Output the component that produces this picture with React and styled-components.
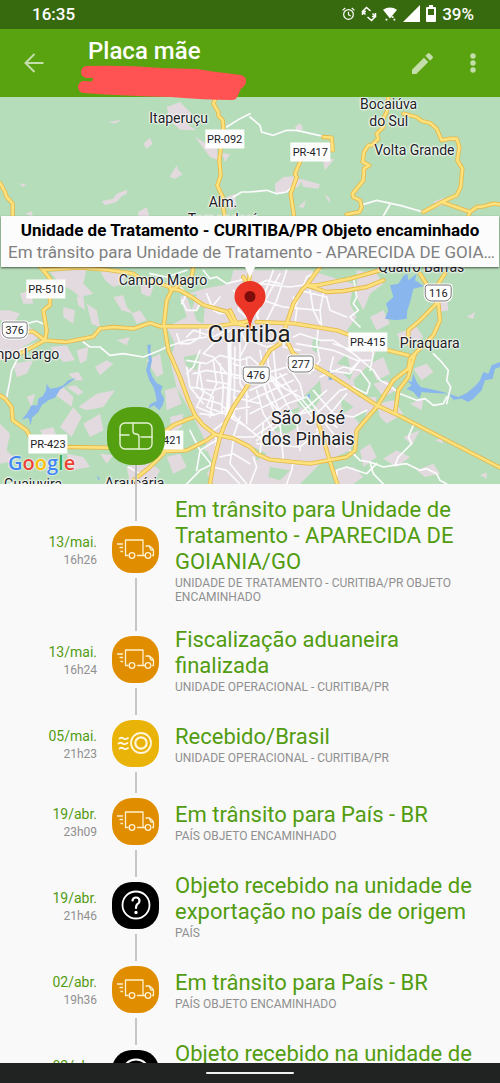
import styled, { createGlobalStyle } from 'styled-components'

const GlobalStyle=createGlobalStyle`
  * {
    box-sizing: border-box;
  }
  body {
    margin: 0;
    background-color: #f9f9f9;
    font-family: Roboto, "Liberation Sans", sans-serif;
  }
`;

const Screen=styled.div`
  width: 100%;
  height: 100vh;
  display: flex;
  flex-direction: column;
  overflow: hidden;
`;

const StatusBar=styled.div`
  flex: none;
  height: 29px;
  padding: 0 26px 2px 32px;
  display: flex;
  align-items: center;
  justify-content: space-between;
  background-color: #376a0e;
  color: #fff;
  font-size: 17px;
  font-weight: 500;
`;

const StatusIcons=styled.div`
  display: flex;
  align-items: center;
  gap: 6px;
`;

const AppBar=styled.header`
  flex: none;
  height: 68px;
  padding: 0 9px 0 16px;
  display: flex;
  align-items: center;
  background-color: #59a310;
`;

const IconButton=styled.button`
  flex: none;
  width: 36px;
  height: 36px;
  padding: 0;
  border: none;
  background: none;
  display: flex;
  align-items: center;
  justify-content: center;
  color: #c3deaa;
  cursor: pointer;
`;

const Heading=styled.div`
  flex: 1;
  height: 100%;
  padding: 8px 0 0 24px;
`;

const Title=styled.h1`
  margin: 0;
  padding-left: 12px;
  font-size: 24px;
  line-height: 28px;
  font-weight: 500;
  color: #fff;
`;

const Scribble=styled.svg`
  display: block;
  position: relative;
  z-index: 2;
`;

const Actions=styled.div`
  display: flex;
  gap: 15px;
`;

const MapArea=styled.div`
  flex: none;
  position: relative;
  height: 387px;
`;

const MapView=styled.div`
  position: absolute;
  inset: 0;
  overflow: hidden;
  background-color: #b6ddb9;
`;

const MapArt=styled.svg`
  display: block;
  width: 100%;
  height: 100%;
`;

const Place=styled.span`
  position: absolute;
  left: ${p=>p.$x/15}%;
  top: ${p=>p.$y}px;
  transform: translate(-50%, -50%);
  font-size: ${p=>p.$size || 14}px;
  line-height: ${p=>p.$size ? 21 : 17}px;
  white-space: pre;
  text-align: center;
  color: #202124;
  text-shadow: 0 0 2px #fff, 0 0 2px #fff, 0 0 2px #fff, 0 0 3px #fff;
`;

const Road=styled(Place)`
  padding: 0 2px;
  font-size: 11px;
  line-height: 19px;
  background-color: #fdfdfd;
  text-shadow: none;
`;

const Shield=styled(Road)`
  padding: 0 3px;
  line-height: 15px;
  border: 1px solid #777;
  border-radius: 3px 3px 7px 7px;
  box-shadow: 0 0 0 1px #fff;
`;

const Logo=styled.div`
  position: absolute;
  left: 8px;
  bottom: 9px;
  font-family: "Open Sans", sans-serif;
  font-size: 20px;
  line-height: 24px;
  font-weight: 600;
  text-shadow: 0 0 2px #fff, 0 0 2px #fff;
`;

const Letter=styled.span`
  color: ${p=>p.$color};
`;

const Pin=styled.svg`
  position: absolute;
  left: 50%;
  top: 184px;
  transform: translateX(-50%);
`;

const InfoWindow=styled.div`
  position: absolute;
  left: 1px;
  right: 1px;
  top: 119px;
  padding: 4px 0 3px;
  background-color: #fcfcfc;
  box-shadow: 0 1px 2px rgba(0,0,0,0.6);
  &:after{
    content: '';
    position: absolute;
    left: 50%;
    top: 100%;
    margin-left: -5px;
    border: 5px solid transparent;
    border-top: 11px solid #fcfcfc;
    border-bottom: none;
  }
`;

const InfoTitle=styled.div`
  font-size: 17px;
  line-height: 21px;
  font-weight: 700;
  color: #000;
  text-align: center;
  white-space: nowrap;
`;

const InfoText=styled.div`
  padding-left: 7px;
  font-size: 17px;
  line-height: 23px;
  color: #808080;
  white-space: nowrap;
  overflow: hidden;
  text-overflow: ellipsis;
`;

const Badge=styled.div`
  position: absolute;
  left: 107px;
  bottom: 19px;
  width: 58px;
  height: 58px;
  border-radius: 25px;
  display: flex;
  align-items: center;
  justify-content: center;
  background-color: #55a010;
  &:after{
    content: '';
    position: absolute;
    top: 100%;
    left: 28px;
    width: 2px;
    height: 19px;
    background-color: #b9bdb9;
  }
`;

const Timeline=styled.ol`
  flex: 1;
  min-height: 0;
  margin: 0;
  padding: 0;
  overflow: hidden;
  list-style: none;
`;

const Row=styled.li`
  min-height: 78px;
  display: flex;
  align-items: stretch;
`;

const When=styled.div`
  flex: none;
  width: 97px;
  padding-top: 2px;
  display: flex;
  flex-direction: column;
  justify-content: center;
  text-align: right;
`;

const Day=styled.span`
  font-size: 14px;
  line-height: 20px;
  color: #519c10;
`;

const Hour=styled.span`
  font-size: 12px;
  line-height: 16px;
  color: #909090;
`;

const Track=styled.div`
  flex: none;
  width: 78px;
  padding-right: 1px;
  display: flex;
  flex-direction: column;
  align-items: center;
  gap: 5px;
`;

const Line=styled.div`
  flex: 1;
  width: 2px;
  background-color: #c6c6c6;
`;

const Dot=styled.div`
  flex: none;
  width: 47px;
  height: 47px;
  border-radius: 20px;
  display: flex;
  align-items: center;
  justify-content: center;
  background-color: ${p=>p.$color};
`;

const Event=styled.div`
  flex: 1;
  padding: 13px 24px 10px 0;
  display: flex;
  flex-direction: column;
  justify-content: center;
`;

const EventTitle=styled.div`
  font-size: 22px;
  line-height: 26px;
  color: #519c10;
`;

const EventPlace=styled.div`
  margin-top: 1px;
  font-size: 12px;
  line-height: 14px;
  color: #909090;
  text-transform: uppercase;
`;

const NavBar=styled.div`
  flex: none;
  height: 20px;
  display: flex;
  justify-content: center;
  padding-top: 9px;
  background-color: #202322;
`;

const NavHandle=styled.div`
  width: 88px;
  height: 2px;
  border-radius: 1px;
  background-color: #f2f2f2;
`;

// map drawing, 3 units for each pixel
const urban=[
  'M540 600L610 575L690 560L700 520L930 520L1010 545L1060 560L1050 620L1070 660L1040 700L1090 740L1130 760L1110 800L1060 850L1075 900L1130 900L1120 950L1080 970L1050 1060L960 1100L900 1161L640 1161L600 1100L620 1040L580 960L530 870L510 790L525 740L500 690L560 660Z',
  'M500 30L540 15L575 50L560 80L590 100L540 98L510 70Z',
  'M585 120L620 140L650 150L655 190L630 180Z', 'M665 168L690 172L675 195Z',
  'M430 140L450 122L458 140L440 155Z', 'M508 240L530 205L535 220L548 232L525 245Z',
  'M305 312L340 305L350 290L382 278L380 292L365 298L350 315L315 325Z',
  'M60 258L80 264L66 270Z', 'M415 345L440 330L448 357L415 357Z', 'M75 352L95 342L98 357Z',
  'M325 75L365 68L345 80Z', 'M680 300L705 290L710 330L690 340Z',
  'M825 260L850 240L880 238L905 250L895 270L870 275L850 290L825 290Z', 'M900 245L960 262L955 275L910 270Z',
  'M968 190L1004 185L975 220Z', 'M973 290L990 305L988 318Z', 'M895 330L917 310L912 332Z',
  'M885 90L900 78L910 96L890 105Z', 'M1300 315L1330 302L1340 318L1310 332Z',
  'M150 525L260 515L250 560L280 590L240 600L215 580L180 560Z',
  'M230 600L250 595L255 640L235 625Z', 'M300 520L380 520L370 560L340 570L315 550Z', 'M340 600L370 595L380 630L400 650L365 640Z',
  'M190 630L225 640L220 680L190 660Z', 'M260 620L290 640L300 690L275 680Z', 'M420 560L460 570L450 600L425 590Z',
  'M0 690L80 680L120 720L70 750L60 780L0 790Z', 'M30 640L60 650L40 680L0 670L0 640Z', 'M60 590L90 580L100 620L70 620Z',
  'M150 750L200 745L225 790L190 795Z', 'M40 800L100 790L80 830L50 840Z', 'M230 760L265 750L260 790L240 800Z',
  'M285 810L320 790L340 800L300 835Z', 'M350 730L390 720L380 745Z', 'M205 830L235 825L250 850L225 850Z',
  'M160 890L190 870L220 900L215 930L175 900Z', 'M200 870L225 865L250 885L235 895Z',
  'M235 930L290 890L345 880L310 930L260 940Z', 'M180 990L220 930L245 960L215 1020Z',
  'M80 900L105 890L95 930Z', 'M250 980L300 950L310 1000L270 1020Z', 'M120 1000L160 990L170 1020L135 1025Z',
  'M0 980L30 1010L20 1060L50 1090L0 1100Z', 'M200 1070L250 1080L270 1110L215 1120Z', 'M300 1070L340 1075L320 1100Z',
  'M380 1110L440 1090L480 1120L460 1161L390 1161Z', 'M495 880L530 870L545 920L500 940Z', 'M510 960L550 950L545 990L515 1010Z',
  'M440 790L480 770L490 830L470 840Z', 'M500 1080L540 1070L560 1110L520 1130Z', 'M395 650L420 640L440 670L410 680Z',
  'M1070 520L1130 530L1150 560L1110 590L1090 640L1070 600Z', 'M1110 660L1150 640L1170 680L1130 700Z',
  'M1190 710L1250 690L1270 720L1230 740L1200 730Z', 'M1240 815L1280 800L1300 825L1265 850Z',
  'M1310 610L1340 590L1345 640L1315 645Z', 'M1130 920L1180 910L1210 950L1160 980L1140 960Z',
  'M1210 1020L1260 1000L1235 1045Z', 'M1230 920L1270 905L1265 940Z', 'M1080 1060L1110 1040L1130 1080L1090 1110Z',
  'M1000 1120L1060 1110L1090 1140L1060 1161L1010 1161Z', 'M1150 1085L1190 1060L1230 1080L1190 1110Z',
  'M1250 1120L1300 1100L1320 1130L1275 1140Z', 'M1305 1030L1325 1022L1330 1040Z', 'M1110 800L1150 780L1170 830L1130 850Z',
  'M1120 860L1160 850L1190 880L1150 900Z', 'M1400 660L1425 645L1420 665Z', 'M1440 1135L1460 1125L1460 1145Z',
];

const parks=[
  'M580 640L615 620L610 680L590 670Z', 'M550 780L600 770L590 820L560 810Z', 'M940 720L960 730L950 770L935 755Z',
  'M915 895L960 850L965 900L930 950L890 920Z', 'M870 940L900 930L890 960Z', 'M620 520L665 530L650 560L615 550Z',
  'M560 1090L620 1060L640 1100L600 1161L560 1161Z', 'M1030 830L1060 820L1050 850Z', 'M1060 960L1100 940L1090 990Z',
  'M560 600L590 590L575 640Z', 'M1020 900L1060 930L1030 950Z', 'M760 1050L800 1070L770 1090Z', 'M810 1110L870 1120L840 1150L805 1140Z',
  'M870 960L900 985L860 1010L820 1000Z', 'M1010 800L1040 770L1050 810Z',
];

const water=[
  'M442 743L453 743L451 760L456 790L450 820L458 840L470 858L488 868L482 885L493 905L488 925L478 940L462 925L445 935L450 922L470 912L466 890L460 870L448 850L438 820L446 790Z',
  'M228 842L205 850L190 865L170 872L150 875L140 860L138 880L128 898L115 905L112 925L95 925L80 950L65 968L85 962L92 985L96 962L115 945L125 925L145 910L165 902L180 878L205 860Z',
  'M1170 565L1195 560L1212 535L1222 530L1225 550L1250 530L1245 550L1272 568L1240 575L1232 610L1222 640L1220 665L1190 670L1155 665L1165 640L1158 620L1180 600Z',
  'M1220 850L1235 855L1240 830L1250 855L1262 870L1300 878L1330 885L1375 900L1400 888L1425 868L1440 850L1450 825L1465 830L1475 805L1500 795L1500 810L1485 815L1478 845L1455 850L1445 880L1420 905L1405 915L1385 905L1360 908L1345 890L1300 888L1265 885L1258 905L1240 885L1220 875L1235 865Z',
  'M985 820L998 818L996 850L986 848Z', 'M920 895L930 890L930 905Z', 'M290 1135L300 1145L295 1150Z',
];

const streets=[
  'M680 90L720 65L750 50', 'M700 300L725 285L750 285',
  'M750 60L780 85L785 105L820 115L860 100L890 100L970 118', 'M750 285L800 280L830 290L860 285L880 265',
  'M1090 322L1130 310L1200 325L1270 345', 'M1170 322L1150 357', 'M610 520L630 545L650 540L680 560L740 545',
  'M130 730L60 760L50 790L35 820L30 850L20 900', 'M250 735L270 750L300 750L330 775L370 770L430 780L480 760L500 750L560 730L620 720',
  'M80 680L110 672L130 680', 'M530 560L560 590L545 620', 'M450 530L500 540L560 520',
  'M545 610L560 640L590 640L600 620L640 625L660 600', 'M620 590L640 640L660 650L690 645',
  'M530 710L540 740L570 740L600 720L600 690L640 700', 'M560 720L580 700L640 720L680 700',
  'M700 580L720 600L715 640L740 660', 'M750 600L770 640L740 680', 'M790 590L770 650L780 680',
  'M560 790L620 800L660 775L720 790L750 780', 'M580 830L620 820L680 830L780 845', 'M600 760L580 810L560 830',
  'M570 870L640 880L670 870L740 890', 'M600 800L590 870L640 900L630 960', 'M640 790L650 860L620 930L700 960',
  'M620 850L680 860', 'M600 830L610 890L590 930L640 950', 'M560 810L570 870L610 920', 'M660 800L670 870L665 950',
  'M720 740L720 860L745 900', 'M740 780L740 980', 'M705 750L702 960', 'M600 950L640 955L680 940L750 930', 'M700 800L760 820', 'M700 840L790 860',
  'M690 960L740 990L800 1040', 'M700 900L780 920', 'M680 970L640 1000L650 1030L600 1060',
  'M720 960L700 1020L760 1020L820 980', 'M780 760L790 820L800 900L850 960', 'M820 760L830 860L900 900L950 960', 'M800 760L810 840L850 900',
  'M750 850L790 830L900 800', 'M750 880L860 830', 'M750 910L880 850', 'M750 950L850 900L890 880', 'M760 1000L860 920L920 900', 'M770 1030L870 960L940 940',
  'M770 880L790 950L820 1000', 'M785 850L840 990', 'M800 850L850 970', 'M820 840L880 960', 'M840 830L880 890L920 940L960 990', 'M750 780L850 870',
  'M750 730L800 750L840 740', 'M860 800L900 860L910 900', 'M870 760L900 790L930 830',
  'M820 520L790 600L770 660', 'M860 520L830 610L800 670', 'M840 530L790 620', 'M880 600L890 640L885 680', 'M890 620L920 540L960 520',
  'M760 600L850 630L960 640', 'M780 560L870 570L940 560', 'M930 580L940 640L960 680', 'M970 590L960 640L965 690', 'M900 580L980 600L990 640L1040 660',
  'M1060 540L1070 600L1060 620L1075 640L1050 660L1080 690', 'M880 720L900 710L960 730L1000 730L1060 770L1120 820L1140 850L1160 860L1200 890L1250 910L1275 905L1300 925L1330 920L1340 900',
  'M890 740L1000 760L1070 790L1110 790', 'M955 690L950 740L960 790L940 820', 'M1000 740L1060 760L1110 750L1120 770L1110 820', 'M1000 780L990 820L1050 830L1080 790',
  'M960 840L1030 810L1080 820L1110 860L1100 890L1060 870L1020 880L990 910', 'M1080 790L1050 820', 'M920 980L1000 900', 'M900 950L980 880', 'M950 1000L1040 890',
  'M920 900L960 950L1010 990', 'M940 880L1000 950L1060 960L1100 940', 'M960 960L1000 1010L1010 1050', 'M1300 770L1320 790L1345 820L1340 850L1352 870L1340 920', 'M1240 985L1225 1020L1235 1040L1195 1080L1185 1105',
  'M1050 1060L1080 1090L1110 1095L1150 1110L1180 1105L1220 1100L1260 1120L1280 1115L1310 1130L1320 1150L1340 1161', 'M1010 1150L1010 1120L1040 1110L1100 1130L1130 1100', 'M1110 1095L1120 1130L1150 1161',
  'M880 1090L875 1120L860 1161', 'M760 1080L770 1110L750 1161', 'M650 1030L640 1100L600 1120L560 1161', 'M700 1030L690 1100L740 1161',
  'M600 1060L640 1110L680 1120L720 1161', 'M570 1000L600 1060L590 1120', 'M770 1040L900 1050L960 1000', 'M790 980L780 1070', 'M660 1080L700 1070L750 1100',
  'M840 980L850 1090', 'M890 970L900 1060', 'M590 900L660 920L750 1000', 'M610 770L640 780L680 830', 'M690 700L640 740L610 770', 'M700 710L690 750', 'M720 700L740 740L720 780',
  'M385 1110L420 1130L400 1161', 'M840 560L800 550L760 570', 'M860 690L850 750L900 760',
];

const highways=[
  'M0 258L15 285L20 300L38 320L38 400L80 470L130 520L150 545L150 624L130 640L140 700L135 730',
  'M648 0L640 20L655 45L655 55L668 70L672 120L662 155L658 190L662 235L652 265L668 300L668 320L680 400',
  'M130 518L240 512L320 518L400 530L420 545L480 560L510 570', 'M510 575L540 580L575 600L610 624L680 644L700 680',
  'M580 510L575 540L515 579L500 610L492 680L505 760L540 840L565 910L585 955L610 985L645 1012L700 1024L750 1050L770 1070L810 1088L930 1100L1040 1080L1065 1060L1070 1000L1130 930L1180 850L1225 815L1230 785L1250 765L1300 715L1320 670L1315 619L1260 530',
  'M80 704L100 704L135 730L200 735L280 719L300 695L340 690L400 695L450 678L480 688L650 688L700 680L750 672',
  'M60 770L135 730', 'M690 640L710 680L760 690', 'M730 540L760 590', 'M750 520L745 580', 'M770 675L880 679L1010 700L1050 715', 'M1165 760L1225 775',
  'M0 895L15 905L35 930L38 970L80 1000L90 1020L200 1050L320 1052L430 1065L560 1060L620 1030L645 1012',
  'M500 1000L520 985L560 968L585 960', 'M400 1150L450 1110L500 1060',
  'M1310 619L1260 670L1225 700L1225 740', 'M1245 770L1230 820L1225 840L1195 880L1185 950',
  'M860 730L880 770L1000 840L1130 925L1185 950L1500 1112',
  'M960 510L920 565L905 580L880 620L860 680L840 740L810 760L780 810L740 870L700 930L675 980L660 1020L640 1100L630 1161',
  'M950 960L980 1060L995 1110L1012 1161',
  'M920 565L950 565L1050 545L1140 520', 'M920 565L980 585L1030 582L1100 570L1150 550', 'M1335 530L1315 560L1310 619',
  'M970 120L995 122L998 160', 'M900 195L885 230L890 240L872 290L882 357',
  'M1165 0L1160 45L1150 65L1150 90L1130 110L1135 125L1115 145L1105 145L1092 165L1088 195L1108 205L1092 215L1090 250L1058 290L1060 300L1080 310L1085 330L1078 345L1040 352',
  'M1210 50L1250 60L1265 72L1290 78L1310 95L1325 130L1350 125L1370 125L1378 150L1372 190L1387 215L1382 270L1370 295L1325 315L1270 345',
  'M1325 315L1410 345L1430 330L1450 328L1480 320L1500 322', 'M1410 345L1395 380',
];

// x in map units, y in pixels
const places=[
  {text:'Itaperuçu', x:536, y:21}, {text:'Bocaiúva\ndo Sul', x:1166, y:16}, {text:'Volta Grande', x:1243, y:53},
  {text:'Alm.\nTamandaré', x:669, y:114}, {text:'Quatro Barras', x:1264, y:170}, {text:'Campo Magro', x:489, y:183},
  {text:'Campo Largo', x:52, y:257}, {text:'Piraquara', x:1289, y:246},
  {text:'Curitiba', x:747, y:237, size:24}, {text:'São José\ndos Pinhais', x:924, y:331, size:18},
  {text:'Guajuvira', x:99, y:387}, {text:'Araucária', x:404, y:386},
];

const roads=[
  {text:'PR-092', x:674, y:42}, {text:'PR-417', x:931, y:55}, {text:'PR-510', x:138, y:192},
  {text:'PR-415', x:1103, y:245}, {text:'PR-423', x:144, y:347}, {text:'PR-421', x:492, y:343},
];

const shields=[
  {text:'116', x:1315, y:196}, {text:'376', x:44, y:233}, {text:'277', x:902, y:267}, {text:'476', x:768, y:278},
];

const letters=[['G','#4285f4'],['o','#ea4335'],['o','#fbbc05'],['g','#4285f4'],['l','#34a853'],['e','#ea4335']];

const events=[
  {day:'13/mai.', hour:'16h26', kind:'truck', title:'Em trânsito para Unidade de Tratamento - APARECIDA DE GOIANIA/GO', place:'Unidade de Tratamento - Curitiba/PR Objeto encaminhado'},
  {day:'13/mai.', hour:'16h24', kind:'truck', title:'Fiscalização aduaneira finalizada', place:'Unidade Operacional - Curitiba/PR'},
  {day:'05/mai.', hour:'21h23', kind:'received', title:'Recebido/Brasil', place:'Unidade Operacional - Curitiba/PR'},
  {day:'19/abr.', hour:'23h09', kind:'truck', title:'Em trânsito para País - BR', place:'País Objeto encaminhado'},
  {day:'19/abr.', hour:'21h46', kind:'unknown', title:'Objeto recebido na unidade de exportação no país de origem', place:'País'},
  {day:'02/abr.', hour:'19h36', kind:'truck', title:'Em trânsito para País - BR', place:'País Objeto encaminhado'},
  {day:'02/abr.', hour:'19h33', kind:'unknown', title:'Objeto recebido na unidade de exportação no país de origem', place:'País'},
];

const colors={truck:'#e08e00', received:'#eab308', unknown:'#000'};

const Truck=()=>(
  <svg width="39" height="24" viewBox="0 0 39 24" fill="none" stroke="#fdf0d0" strokeWidth="1.3" strokeLinecap="round" strokeLinejoin="round">
    <path d="M12 18.500H9.500V3H27V18.500H21.500M30 9H33.500Q36.500 10.500 37.500 14V18.500H36.500M33.500 9.500L35 13H37.500M27 18.500H29" />
    <circle cx="16" cy="18.500" r="2.800" />
    <circle cx="32" cy="18.500" r="2.800" />
    <path d="M1.500 7H6.500M4 10.500H6.500M5 14.500H6.500" />
  </svg>
)

const Received=()=>(
  <svg width="37" height="24" viewBox="0 0 37 24" fill="none" stroke="#fff6dc" strokeWidth="1.800" strokeLinecap="round">
    <circle cx="24" cy="12" r="10" />
    <circle cx="24" cy="12" r="5.700" strokeWidth="2.200" />
    <path d="M2.500 7.500q2-1.500 4 0t4.500-.5M1.500 12.500q2-1.500 4 0t5-.5M2.500 17.500q2-1.500 4 0t4.500-.5" />
  </svg>
)

const Unknown=()=>(
  <svg width="30" height="30" viewBox="0 0 30 30" fill="none" stroke="#fff" strokeWidth="1.800" strokeLinecap="round">
    <circle cx="15" cy="15" r="13.500" />
    <path d="M11.500 10.500Q12 7.500 15 7.500Q18.500 7.500 18.500 11Q18.500 13 16.500 14Q15 15 15 18" strokeWidth="2.200" />
    <circle cx="15" cy="22.500" r=".8" />
  </svg>
)

const icons={truck:<Truck/>, received:<Received/>, unknown:<Unknown/>};

function TrackingMap() {
  return (
    <MapView>
      <MapArt viewBox="0 0 1500 1161" preserveAspectRatio="xMidYMid slice" fill="none" strokeLinejoin="round" strokeLinecap="round">
        <path d={urban.join('')} fill="#e2dade" />
        <path d={parks.join('')} fill="#b6ddb9" />
        <path d={water.join('')} fill="#8ab6ee" />
        <path d={streets.join('')} stroke="#fbfbfd" strokeWidth="5" />
        <path d="M688 740L690 830L682 960" stroke="#fbfbfd" strokeWidth="12" />
        <path d={highways.join('')} stroke="#e5b84a" strokeWidth="13" />
        <path d={highways.join('')} stroke="#fde17c" strokeWidth="8" />
      </MapArt>
      {places.map((p)=><Place key={p.text} $x={p.x} $y={p.y} $size={p.size}>{p.text}</Place>)}
      {roads.map((r)=><Road key={r.text} $x={r.x} $y={r.y}>{r.text}</Road>)}
      {shields.map((s)=><Shield key={s.text} $x={s.x} $y={s.y}>{s.text}</Shield>)}
      <Logo>{letters.map(([l,c],i)=><Letter key={i} $color={c}>{l}</Letter>)}</Logo>
      <Pin width="32" height="50" viewBox="0 0 32 50">
        <path d="M16 50C15 39 12 34 7 28C3 24 .5 21 .5 15.500A15.500 15.500 0 0 1 31.500 15.500C31.500 21 29 24 25 28C20 34 17 39 16 50Z" fill="#ea3527" />
        <circle cx="16" cy="15.500" r="5.500" fill="#7d0d0a" />
      </Pin>
      <InfoWindow>
        <InfoTitle>Unidade de Tratamento - CURITIBA/PR Objeto encaminhado</InfoTitle>
        <InfoText>Em trânsito para Unidade de Tratamento - APARECIDA DE GOIANIA/GO</InfoText>
      </InfoWindow>
    </MapView>
  )
}

function App() {
  return (
    <>
      <GlobalStyle/>
      <Screen>
        <StatusBar>
          <span>16:35</span>
          <StatusIcons>
            <svg width="13" height="14" viewBox="0 0 14 15" fill="none" stroke="#fff" strokeWidth="1.300">
              <circle cx="7" cy="8" r="5.200" />
              <path d="M7 5V8.300L9.300 9.600M.6 3.600L3.500 1M13.400 3.600L10.500 1" />
            </svg>
            <svg width="16" height="16" viewBox="0 0 16 16" fill="none" stroke="#fff" strokeWidth="1.500">
              <path d="M9.500 5L5.500 1.500L1.500 5.500L4.500 8.500M6.500 11L10.500 14.500L14.500 10.500L11.500 7.500M14.500 7V10.500H11M1.500 9V5.500H5" />
            </svg>
            <svg width="14" height="16" viewBox="0 0 16 16" fill="#fff">
              <path d="M0 3Q8-2 16 3L8 13ZM3 13.500h2v2h-2ZM10 10.500h2v2h-2ZM12 13.500h2v2h-2Z" />
            </svg>
            <svg width="17" height="17" viewBox="0 0 17 17" fill="#fff"><path d="M17 0V17H0Z" /></svg>
            <svg width="10" height="17" viewBox="0 0 10 17" fill="#fff">
              <path fillRule="evenodd" d="M3 0H7V2H9Q10 2 10 3V16Q10 17 9 17H1Q0 17 0 16V3Q0 2 1 2H3ZM2 4V10H8V4Z" />
            </svg>
            <span>39%</span>
          </StatusIcons>
        </StatusBar>
        <AppBar>
          <IconButton aria-label="Voltar">
            <svg width="20" height="20" viewBox="0 0 20 20" fill="none" stroke="currentColor" strokeWidth="2"><path d="M19.500 10H2M10.500 1L1.500 10L10.500 19" /></svg>
          </IconButton>
          <Heading>
            <Title>Placa mãe</Title>
            <Scribble width="172" height="36" viewBox="0 0 172 36">
              <path d="M11 7Q50 6 85 9L120 10Q130 12 164 16Q162 24 120 18Q60 16 22 17M8 22Q50 25 95 26Q130 29 156 29L160 20" fill="none" stroke="#ff5252" strokeWidth="12" strokeLinecap="round" strokeLinejoin="round" />
            </Scribble>
          </Heading>
          <Actions>
            <IconButton aria-label="Editar">
              <svg width="23" height="23" viewBox="0 0 24 24" fill="currentColor"><path d="M1 18.500V23H5.500L18 10.500L13.500 6ZM22.500 6.500Q23.500 5.500 22.500 4.500L19.500 1.500Q18.500.5 17.500 1.500L15 4L20 9Z" /></svg>
            </IconButton>
            <IconButton aria-label="Mais opções">
              <svg width="6" height="20" viewBox="0 0 6 20" fill="currentColor"><circle cx="3" cy="3" r="2.700" /><circle cx="3" cy="10" r="2.700" /><circle cx="3" cy="17" r="2.700" /></svg>
            </IconButton>
          </Actions>
        </AppBar>
        <MapArea>
          <TrackingMap/>
          <Badge>
            <svg width="34" height="28" viewBox="0 0 34 28" fill="none" stroke="#e4f2d6" strokeWidth="1.400" strokeLinecap="round">
              <rect x="1" y="1" width="32" height="26" rx="5" />
              <path d="M14 1V9Q14 12 17 12Q20 12 20 15V27M1 13H10M22 15H33" />
            </svg>
          </Badge>
        </MapArea>
        <Timeline>
          {events.map((e,i)=>(
            <Row key={i}>
              <When>
                <Day>{e.day}</Day>
                <Hour>{e.hour}</Hour>
              </When>
              <Track>
                <Line/>
                <Dot $color={colors[e.kind]}>{icons[e.kind]}</Dot>
                <Line/>
              </Track>
              <Event>
                <EventTitle>{e.title}</EventTitle>
                <EventPlace>{e.place}</EventPlace>
              </Event>
            </Row>
          ))}
        </Timeline>
        <NavBar>
          <NavHandle/>
        </NavBar>
      </Screen>
    </>
  );
}

export default App;
